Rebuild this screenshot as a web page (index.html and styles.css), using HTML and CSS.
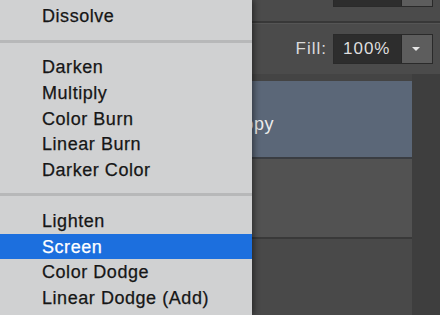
FILE: index.html
```html
<!DOCTYPE HTML>
<html>
<head>
<meta charset="utf-8">
<title>Blend mode menu</title>
<link rel="stylesheet" href="styles.css">
</head>
<body>
<div class="panel">
	<!--opacity-->
	<div class="opt-row top-row">
		<span class="opt-label">Opacity:</span>
		<div class="field"><span class="field-val">100%</span><span class="field-btn"><i class="arrow"></i></span></div>
	</div>
	<div class="rule"></div>
	<!--fill-->
	<div class="opt-row fill-row">
		<span class="opt-label">Fill:</span>
		<div class="field"><span class="field-val">100%</span><span class="field-btn"><i class="arrow"></i></span></div>
	</div>
	<!--layers-->
	<div class="layers">
		<div class="layer-list">
			<div class="layer active"><span class="layer-name">Layer 1 copy</span></div>
			<div class="layer"></div>
			<div class="layer last"></div>
		</div>
		<div class="scroll"></div>
	</div>
</div>

<ul class="menu">
	<li>Dissolve</li>
	<li class="sep"></li>
	<li>Darken</li>
	<li>Multiply</li>
	<li>Color Burn</li>
	<li>Linear Burn</li>
	<li>Darker Color</li>
	<li class="sep"></li>
	<li>Lighten</li>
	<li class="on">Screen</li>
	<li>Color Dodge</li>
	<li>Linear Dodge (Add)</li>
</ul>
</body>
</html>
```
FILE: styles.css
```css
html,body,div,ul,li,span,i{margin:0;padding:0;}
li{list-style:none;}
body{width:440px;height:315px;overflow:hidden;position:relative;background:#4b4b4b;font-family:"Liberation Sans",Arial,sans-serif;}
/*panel*/
.panel{width:440px;height:315px;display:flex;flex-direction:column;}
.opt-row{display:flex;justify-content:flex-end;align-items:center;padding-right:7px;gap:6px;}
	.top-row{height:21px;align-items:flex-start;}
	.top-row .opt-label,.top-row .field{margin-top:-23px;}
	.top-row .opt-label{line-height:30px;}
	.fill-row{height:50px;}
.rule{height:2px;background:#383838;border-bottom:1px solid #555;}
.opt-label{font-size:17px;letter-spacing:1px;color:#dcdcdc;}
.field{display:flex;height:30px;width:100px;border:1px solid #2a2a2a;box-sizing:border-box;background:#2d2d2d;}
	.field-val{flex:1;font-size:17px;letter-spacing:1px;line-height:28px;color:#dedede;padding-left:9px;}
	.field-btn{width:30px;background:#5d5d5d;border-left:1px solid #262626;display:flex;align-items:center;justify-content:center;}
	.arrow{display:block;width:0;height:0;border-left:4px solid transparent;border-right:4px solid transparent;border-top:4px solid #e6e6e6;margin-left:-3px;}
/*layers*/
.layers{flex:1;display:flex;}
	.layer-list{width:412px;padding-top:7px;background:#444;display:flex;flex-direction:column;}
	.scroll{flex:1;background:#3e3e3e;}
.layer{height:78px;background:#525252;border-bottom:2px solid #393939;}
	.layer.active{height:76px;background:#5b6778;border-bottom-color:#3a3d42;display:flex;align-items:center;}
	.layer.last{flex:1;background:#494949;border-bottom:0;}
.layer-name{width:274px;text-align:right;font-size:18px;letter-spacing:.5px;color:#ececec;padding-top:10px;}
/*menu*/
.menu{position:absolute;left:0;top:0;width:252px;height:315px;box-sizing:border-box;padding-top:3.4px;background:#d0d1d2;box-shadow:2px 0 6px rgba(0,0,0,.45);}
	.menu li{height:25.75px;box-sizing:border-box;padding:2px 0 0 42px;line-height:23.75px;font-size:18px;letter-spacing:.55px;color:#161616;-webkit-text-stroke:.25px #161616;}
	.menu li.sep{height:3px;margin:10.5px 0 11.5px;padding:0;background:#b7b8b9;}
	.menu li.on{background:#1c6fde;color:#fff;-webkit-text-stroke:.25px #fff;}
```
